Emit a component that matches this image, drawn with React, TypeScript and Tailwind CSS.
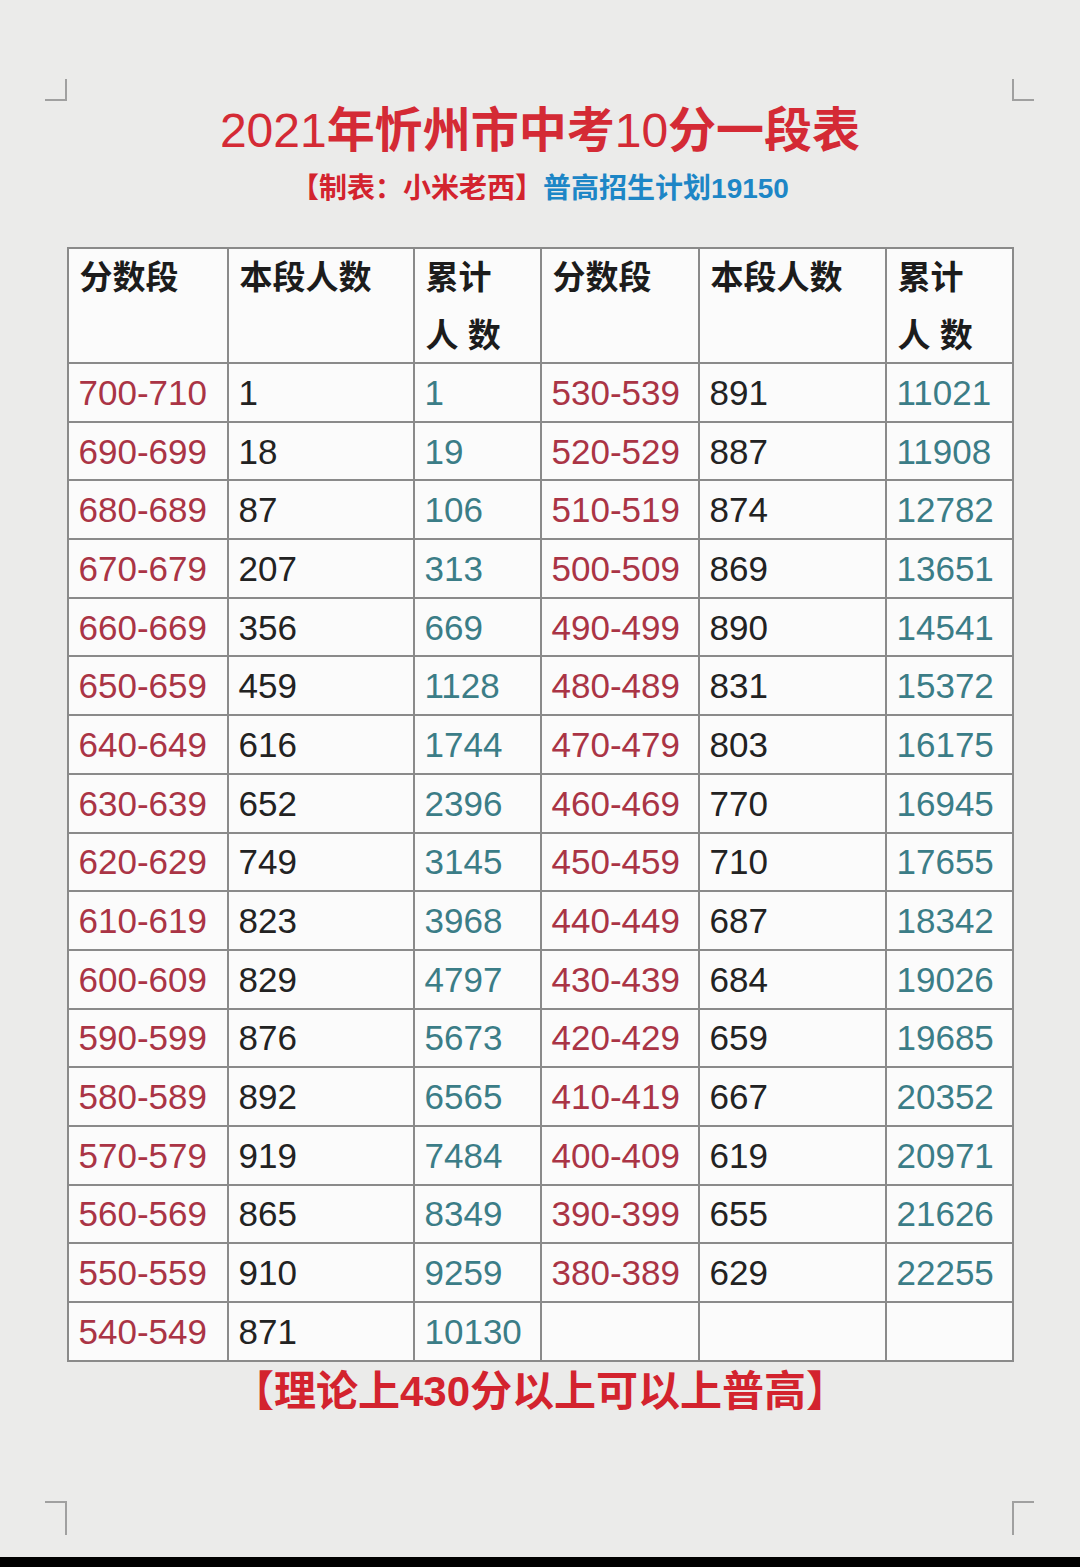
const left = [
  ["700-710", "1", "1"],
  ["690-699", "18", "19"],
  ["680-689", "87", "106"],
  ["670-679", "207", "313"],
  ["660-669", "356", "669"],
  ["650-659", "459", "1128"],
  ["640-649", "616", "1744"],
  ["630-639", "652", "2396"],
  ["620-629", "749", "3145"],
  ["610-619", "823", "3968"],
  ["600-609", "829", "4797"],
  ["590-599", "876", "5673"],
  ["580-589", "892", "6565"],
  ["570-579", "919", "7484"],
  ["560-569", "865", "8349"],
  ["550-559", "910", "9259"],
  ["540-549", "871", "10130"],
];

const right = [
  ["530-539", "891", "11021"],
  ["520-529", "887", "11908"],
  ["510-519", "874", "12782"],
  ["500-509", "869", "13651"],
  ["490-499", "890", "14541"],
  ["480-489", "831", "15372"],
  ["470-479", "803", "16175"],
  ["460-469", "770", "16945"],
  ["450-459", "710", "17655"],
  ["440-449", "687", "18342"],
  ["430-439", "684", "19026"],
  ["420-429", "659", "19685"],
  ["410-419", "667", "20352"],
  ["400-409", "619", "20971"],
  ["390-399", "655", "21626"],
  ["380-389", "629", "22255"],
  ["", "", ""],
];

const cjk = "font-['Liberation_Sans','Noto_Sans_CJK_SC',sans-serif]";

const HeadCell = ({ lines }: { lines: string[] }) => (
  <div className="h-[115px] border-r-2 border-b-2 border-[#8a8a8a] pl-[11px] text-[33px] font-bold leading-[58px] text-[#1c1c1c]">
    {lines.map((l) => (
      <div key={l}>{l}</div>
    ))}
  </div>
);

const Cell = ({ value, color }: { value: string; color: string }) => (
  <div
    className={`flex h-[58.7px] items-center border-r-2 border-b-2 border-[#8a8a8a] pl-[10px] text-[35px] leading-none ${color}`}
  >
    {value}
  </div>
);

const Corner = ({ className }: { className: string }) => (
  <div className={`absolute h-[22px] w-[22px] border-[#a0a0a0] ${className}`} />
);

export default function App() {
  return (
    <div className={`relative flex h-[1567px] w-[1080px] flex-col items-center bg-[#ebebea] ${cjk}`}>
      <Corner className="top-[79px] left-[45px] border-r-2 border-b-2" />
      <Corner className="top-[79px] left-[1012px] border-l-2 border-b-2" />
      <Corner className="top-[1501px] left-[45px] border-r-2 border-t-2 h-[34px]" />
      <Corner className="top-[1501px] left-[1012px] border-l-2 border-t-2 h-[34px]" />

      <h1 className="mt-[104px] text-[48px] leading-[54px] font-bold text-[#d42a35]">
        <span className="font-normal">2021</span>年忻州市中考<span className="font-normal">10</span>分一段表
      </h1>
      <p className="mt-[13px] text-[28px] leading-[36px] font-bold">
        <span className="text-[#d3232e]">【制表：小米老西】</span>
        <span className="text-[#1d86c6]">普高招生计划19150</span>
      </p>

      <div className="mt-[40px] grid grid-cols-[160px_186px_127px_158px_187px_127px] border-t-2 border-l-2 border-[#8a8a8a] bg-[#fbfbfb]">
        <HeadCell lines={["分数段"]} />
        <HeadCell lines={["本段人数"]} />
        <HeadCell lines={["累计", "人 数"]} />
        <HeadCell lines={["分数段"]} />
        <HeadCell lines={["本段人数"]} />
        <HeadCell lines={["累计", "人 数"]} />
        {left.map((row, i) => (
          <>
            <Cell key={`a${i}`} value={row[0]} color="text-[#aa3445]" />
            <Cell key={`b${i}`} value={row[1]} color="text-[#222222]" />
            <Cell key={`c${i}`} value={row[2]} color="text-[#3b7d87]" />
            <Cell key={`d${i}`} value={right[i][0]} color="text-[#aa3445]" />
            <Cell key={`e${i}`} value={right[i][1]} color="text-[#222222]" />
            <Cell key={`f${i}`} value={right[i][2]} color="text-[#3b7d87]" />
          </>
        ))}
      </div>

      <p className="mt-[5px] text-[42px] leading-[50px] font-bold text-[#d3232e]">
        【理论上430分以上可以上普高】
      </p>

      <div className="flex-1" />
      <div className="h-[10px] w-full bg-black" />
    </div>
  );
}
